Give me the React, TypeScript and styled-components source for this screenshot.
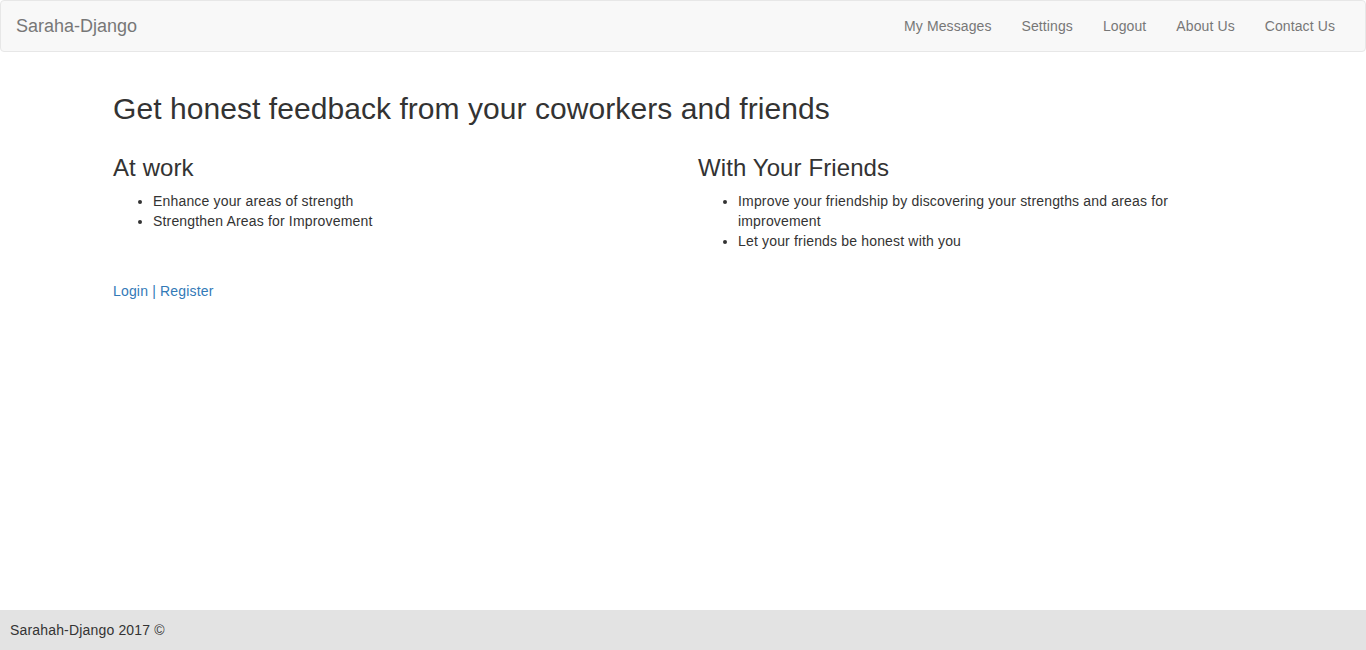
import React from "react";
import styled, { createGlobalStyle } from "styled-components";

const Global = createGlobalStyle`
  * { box-sizing: border-box; }
  html, body { margin: 0; padding: 0; }
  body {
    font-family: "Liberation Sans", Arial, Helvetica, sans-serif;
    font-size: 14px;
    line-height: 1.42857143;
    letter-spacing: 0.17px;
    color: #333;
    background: #fff;
  }
`;

const Page = styled.div`
  min-height: 100vh;
  display: flex;
  flex-direction: column;
`;

const Navbar = styled.nav`
  min-height: 50px;
  margin-bottom: 20px;
  padding-right: 15px;
  background: #f8f8f8;
  border: 1px solid #e7e7e7;
  border-radius: 4px;
  display: flex;
  justify-content: space-between;
  align-items: stretch;
`;

const Brand = styled.a`
  display: block;
  padding: 15px;
  font-size: 18px;
  line-height: 20px;
  letter-spacing: 0;
  height: 50px;
  color: #777;
  text-decoration: none;
`;

const NavList = styled.ul`
  display: flex;
  list-style: none;
  margin: 0;
  padding: 0;
`;

const NavLink = styled.a`
  display: block;
  padding: 15px;
  line-height: 20px;
  letter-spacing: 0.1px;
  color: #777;
  text-decoration: none;
`;

const Container = styled.main`
  width: 1170px;
  margin: 0 auto;
  padding: 0 15px;
`;

const Title = styled.h2`
  font-size: 30px;
  font-weight: 500;
  line-height: 1.1;
  letter-spacing: 0.06px;
  margin: 20px 0 10px;
`;

const Row = styled.div`
  display: grid;
  grid-template-columns: 1fr 1fr;
  margin: 0 -15px;
`;

const Col = styled.div`
  padding: 0 15px;
`;

const SubTitle = styled.h3`
  font-size: 24px;
  font-weight: 500;
  line-height: 1.1;
  letter-spacing: 0.1px;
  margin: 20px 0 10px;
`;

const List = styled.ul`
  margin: 0 0 10px;
  padding-left: 40px;
`;

const Links = styled.p`
  margin: 20px 0 10px;
`;

const Link = styled.a`
  color: #337ab7;
  text-decoration: none;
`;

const Footer = styled.footer`
  margin-top: auto;
  height: 40px;
  line-height: 40px;
  padding-left: 10px;
  background: #e3e3e3;
  color: #333;
`;

export default function App() {
  return (
    <Page>
      <Global />
      <Navbar>
        <Brand href="#">Saraha-Django</Brand>
        <NavList>
          {["My Messages", "Settings", "Logout", "About Us", "Contact Us"].map((t) => (
            <li key={t}>
              <NavLink href="#">{t}</NavLink>
            </li>
          ))}
        </NavList>
      </Navbar>
      <Container>
        <Title>Get honest feedback from your coworkers and friends</Title>
        <Row>
          <Col>
            <SubTitle>At work</SubTitle>
            <List>
              <li>Enhance your areas of strength</li>
              <li>Strengthen Areas for Improvement</li>
            </List>
          </Col>
          <Col>
            <SubTitle>With Your Friends</SubTitle>
            <List>
              <li>Improve your friendship by discovering your strengths and areas for improvement</li>
              <li>Let your friends be honest with you</li>
            </List>
          </Col>
        </Row>
        <Links>
          <Link href="#">Login</Link> <Link as="span">|</Link> <Link href="#">Register</Link>
        </Links>
      </Container>
      <Footer>Sarahah-Django 2017 ©</Footer>
    </Page>
  );
}
